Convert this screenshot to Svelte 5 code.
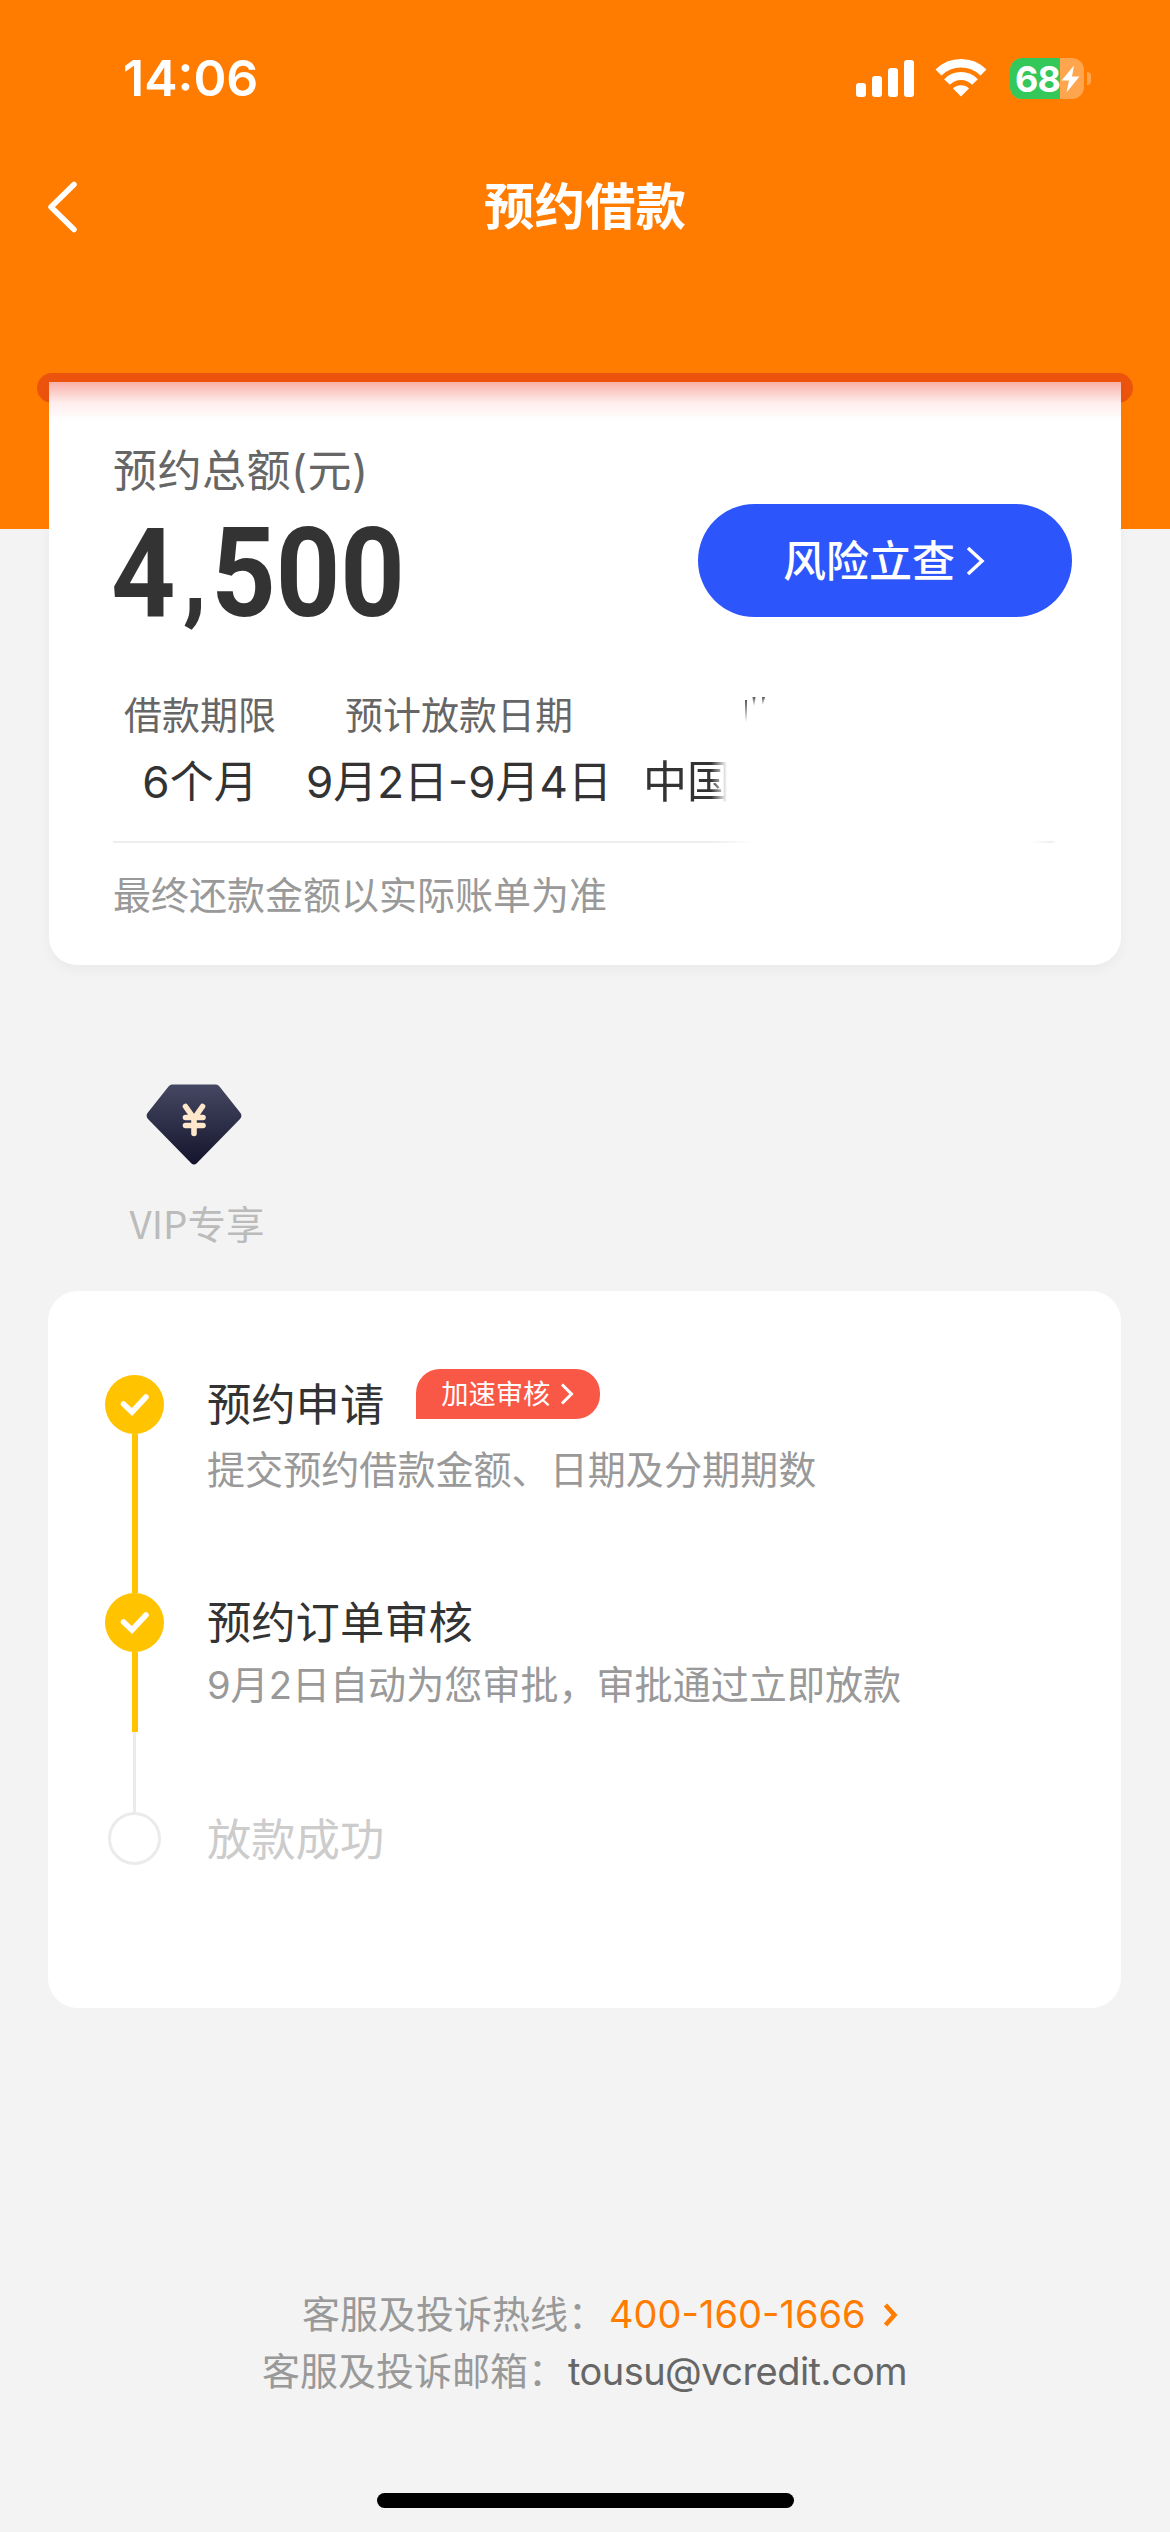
<script>
    let battery = 68;
    let amount = ['4', '500'];
    let hotline = '400-160-1666';
    let email = 'tousu@vcredit.com';

    let steps = [
        { title: '预约申请', desc: '提交预约借款金额、日期及分期期数', tag: '加速审核', state: 'done' },
        { title: '预约订单审核', desc: '9月2日自动为您审批，审批通过立即放款', state: 'current' },
        { title: '放款成功', state: 'todo' },
    ];
</script>

<div class="page">
    <div class="status">
        <span class="time">14:06</span>
        <div class="status-icons">
            <svg class="signal" width="58" height="37" viewBox="0 0 58 37" fill="#fff">
                <rect x="0" y="23" width="10" height="14" rx="3" />
                <rect x="16" y="16" width="10" height="21" rx="3" />
                <rect x="32" y="8" width="10" height="29" rx="3" />
                <rect x="48" y="0" width="10" height="37" rx="3" />
            </svg>
            <svg class="wifi" width="52" height="38" viewBox="0 0 52 38">
                <path d="M3.500 13.500A32 32 0 0 1 48.500 13.500" fill="none" stroke="#fff" stroke-width="8.500" />
                <path d="M12 23A19.500 19.500 0 0 1 40 23" fill="none" stroke="#fff" stroke-width="8" />
                <path d="M26 37.500L18 29.500A11.300 11.300 0 0 1 34 29.500Z" fill="#fff" />
            </svg>
            <div class="battery">
                <div class="battery-fill" style="width: {battery}%"></div>
                <span class="battery-text">{battery}</span>
                <svg class="bolt" width="19" height="28" viewBox="0 0 19 28">
                    <path d="M13 0.500L0.500 15.500H8L5.500 27.500L18.500 11.500H11Z" fill="#fff" />
                </svg>
            </div>
            <span class="battery-cap"></span>
        </div>
    </div>

    <div class="nav">
        <svg class="back" width="33" height="56" viewBox="0 0 33 56">
            <path d="M28 5.500L5 28L28 50.500" fill="none" stroke="#fff" stroke-width="5.500" stroke-linecap="round" stroke-linejoin="round" />
        </svg>
        <h1>预约借款</h1>
    </div>

    <div class="slot"></div>
    <div class="card loan">
        <div class="summary">
            <div>
                <div class="total-label">预约总额(元)</div>
                <div class="total">{amount[0]}<span class="comma">,</span>{amount[1]}</div>
            </div>
            <button class="check">
                <span>风险立查</span>
                <svg width="20" height="30" viewBox="0 0 20 30">
                    <path d="M3 2L17 15L3 28" fill="none" stroke="#fff" stroke-width="3.500" />
                </svg>
            </button>
        </div>

        <div class="terms">
            <div class="term">
                <div class="term-label">借款期限</div>
                <div class="term-value">6个月</div>
            </div>
            <div class="term">
                <div class="term-label">预计放款日期</div>
                <div class="term-value">9月2日-9月4日</div>
            </div>
            <div class="term account">
                <div class="term-label">
                    <!-- masked account label -->
                    <svg width="24" height="28" viewBox="0 0 24 28">
                        <defs>
                            <linearGradient id="tick" x1="0" y1="0" x2="0" y2="1">
                                <stop offset="0" stop-color="#555" />
                                <stop offset="1" stop-color="#fff" />
                            </linearGradient>
                        </defs>
                        <rect x="1" y="3" width="2" height="22" fill="url(#tick)" />
                        <path d="M8.500 0h3l-1 9h-1z" fill="url(#tick)" />
                        <path d="M18 0h3l-2 8h-1z" fill="url(#tick)" />
                    </svg>
                </div>
                <div class="term-value masked">中国</div>
            </div>
        </div>

        <div class="divider"></div>
        <div class="note">最终还款金额以实际账单为准</div>
    </div>

    <div class="vip">
        <svg width="96" height="82" viewBox="0 0 96 82">
            <defs>
                <linearGradient id="gem" x1="0" y1="0" x2="0" y2="1">
                    <stop offset="0" stop-color="#464762" />
                    <stop offset="1" stop-color="#14152c" />
                </linearGradient>
            </defs>
            <path d="M26 0.500H70Q72 0.500 73.500 2.500L94.500 29Q96.500 32 94 35L51 79Q48 82 45 79L2 35Q-0.500 32 1.500 29L22.500 2.500Q24 0.500 26 0.500Z" fill="url(#gem)" />
            <path d="M39.500 22.500L48 34.500L56.500 22.500M48 34.500V49.500M39.500 33.500H57M39.500 41.500H57" fill="none" stroke="#ffe7cb" stroke-width="5.600" stroke-linecap="round" stroke-linejoin="round" />
        </svg>
        <span>VIP专享</span>
    </div>

    <div class="card progress">
        {#each steps as step}
            <div class="step {step.state}">
                <div class="rail">
                    <div class="dot">
                        {#if step.state !== 'todo'}
                            <svg width="30" height="24" viewBox="0 0 30 24">
                                <path d="M3.500 11L12 19L26 4" fill="none" stroke="#fff" stroke-width="5.500" stroke-linecap="round" />
                            </svg>
                        {/if}
                    </div>
                    <div class="line"></div>
                    {#if step.state === 'current'}
                        <div class="line pending"></div>
                    {/if}
                </div>
                <div class="step-body">
                    <div class="step-head">
                        <span class="step-title">{step.title}</span>
                        {#if step.tag}
                            <span class="tag">
                                {step.tag}
                                <svg width="14" height="22" viewBox="0 0 14 22">
                                    <path d="M2 1.500L11.500 11L2 20.500" fill="none" stroke="#fff" stroke-width="3" />
                                </svg>
                            </span>
                        {/if}
                    </div>
                    {#if step.desc}
                        <div class="step-desc">{step.desc}</div>
                    {/if}
                </div>
            </div>
        {/each}
    </div>

    <div class="contact phone">
        <span>客服及投诉热线：</span>
        <span class="hotline">{hotline}</span>
        <svg width="15" height="24" viewBox="0 0 15 24">
            <path d="M2.500 2L11.500 12L2.500 22" fill="none" stroke="#ff7c00" stroke-width="4.500" />
        </svg>
    </div>
    <div class="contact mail">
        <span>客服及投诉邮箱：</span>
        <span class="email">{email}</span>
    </div>

    <div class="home-bar"></div>
</div>

<style>
    :global(body) {
        margin: 0;
        background: #f3f3f3;
    }

    .page {
        width: 1170px;
        height: 2532px;
        overflow: hidden;
        display: flex;
        flex-direction: column;
        background: linear-gradient(#ff7c00 529px, #f3f3f3 529px);
        font-family: Inter, "Noto Sans CJK SC", sans-serif;
        color: #333;
    }

    .status {
        height: 156px;
        box-sizing: border-box;
        padding: 0 79px 0 123px;
        display: flex;
        align-items: center;
        justify-content: space-between;
        color: #fff;
    }

    .time {
        font-size: 50px;
        font-weight: 600;
        line-height: 60px;
    }

    .status-icons {
        display: flex;
        align-items: center;
    }

    .wifi {
        margin: 0 23px 0 21px;
    }

    .battery {
        position: relative;
        width: 74px;
        height: 41px;
        border-radius: 12px;
        overflow: hidden;
        background: #ffa54d;
    }

    .battery-fill {
        height: 100%;
        background: #34c759;
    }

    .battery-text {
        position: absolute;
        left: 5px;
        top: 0;
        font-size: 36px;
        font-weight: 700;
        line-height: 42px;
        letter-spacing: -1px;
    }

    .bolt {
        position: absolute;
        left: 51px;
        top: 7px;
    }

    .battery-cap {
        width: 4px;
        height: 13px;
        margin-left: 3px;
        border-radius: 0 4px 4px 0;
        background: #ffa54d;
    }

    .nav {
        height: 102px;
        display: grid;
        grid-template-columns: 120px 1fr 120px;
        align-items: center;
    }

    .back {
        margin-left: 46px;
    }

    h1 {
        margin: 0;
        font-size: 50.5px;
        font-weight: 700;
        line-height: 60px;
        text-align: center;
        color: #fff;
    }

    .slot {
        flex: none;
        height: 30px;
        margin: 115px 37px 0;
        border-radius: 15px;
        background: #ec530c;
    }

    .card {
        flex: none;
        box-sizing: border-box;
        background: #fff;
    }

    .loan {
        height: 583px;
        z-index: 1;
        margin: -21px 49px 0;
        padding: 59px 49px 0 64px;
        border-radius: 0 0 28px 28px;
        background: linear-gradient(#f9afa7, #fcd9d6 14px, #feeceb 20px, #fff 38px);
        box-shadow: 0 5px 12px rgba(0, 0, 0, 0.04);
    }

    .summary {
        display: flex;
        justify-content: space-between;
        align-items: flex-start;
    }

    .total-label {
        font-size: 44px;
        letter-spacing: 0.5px;
        line-height: 60px;
        color: #666;
    }

    .total {
        margin-left: -2px;
        font-family: Roboto, sans-serif;
        font-size: 125px;
        font-weight: 700;
        line-height: 146px;
        height: 144px;
        transform: scaleX(0.9);
        transform-origin: left;
    }

    .comma {
        margin: 0 5px 0 8px;
        font-size: 108px;
        line-height: 0;
        vertical-align: 5px;
    }

    .check {
        display: flex;
        align-items: center;
        justify-content: center;
        gap: 10px;
        width: 374px;
        height: 113px;
        margin-top: 63px;
        padding: 0;
        border: none;
        border-radius: 57px;
        background: #2c55fb;
        color: #fff;
        font: inherit;
        font-size: 43px;
        font-weight: 500;
        line-height: 60px;
    }

    .check span {
        margin-left: -2px;
    }

    .terms {
        display: grid;
        grid-template-columns: 172px 346px 1fr;
        margin: 40px 0 0 1px;
    }

    .term {
        text-align: center;
        white-space: nowrap;
    }

    .term-label {
        height: 60px;
        font-size: 38px;
        line-height: 60px;
        color: #666;
    }

    .term-value {
        font-size: 44px;
        line-height: 74px;
    }

    .account {
        padding-left: 11px;
        text-align: left;
    }

    .account svg {
        display: block;
        margin-left: 101px;
        padding-top: 12px;
    }

    .masked {
        width: 90px;
        mask-image: linear-gradient(90deg, #000 68px, transparent 84px);
    }

    .divider {
        height: 2px;
        margin: 22px 15px 0 0;
        background: linear-gradient(90deg, #eee 600px, #fff 640px, #fff 918px, #eee 938px, #fff);
    }

    .note {
        margin-top: 22px;
        font-size: 38px;
        line-height: 60px;
        color: #999;
    }

    .vip {
        width: 132px;
        margin: 119px 0 0 131px;
        display: flex;
        flex-direction: column;
        align-items: center;
        gap: 26px;
    }

    .vip svg {
        margin-right: 6px;
    }

    .vip span {
        font-family: "Noto Sans CJK SC", sans-serif;
        font-size: 38.5px;
        font-weight: 400;
        line-height: 60px;
        color: #bbb;
        white-space: nowrap;
    }

    .progress {
        height: 717px;
        margin: 39px 49px 0 48px;
        padding: 84px 57px 0;
        border-radius: 30px;
    }

    .step {
        display: flex;
        gap: 43px;
        height: 218px;
    }

    .step.current {
        height: 219px;
    }

    .rail {
        width: 59px;
        display: flex;
        flex-direction: column;
        align-items: center;
    }

    .dot {
        flex: none;
        width: 59px;
        height: 59px;
        display: flex;
        align-items: center;
        justify-content: center;
        border-radius: 50%;
        background: #ffc300;
    }

    .todo .dot {
        box-sizing: border-box;
        width: 53px;
        height: 53px;
        border: 3px solid #ebebeb;
        background: #fff;
    }

    .line {
        width: 6px;
        flex: 1;
        background: #ffc300;
    }

    .line.pending {
        width: 3px;
        background: #ebebeb;
    }

    .todo .line {
        display: none;
    }

    .step-head {
        display: flex;
        align-items: flex-start;
        height: 60px;
    }

    .step-title {
        font-size: 44.3px;
        line-height: 60px;
    }

    .todo .step-title {
        margin-top: -2px;
        color: #ccc;
    }

    .tag {
        display: flex;
        align-items: center;
        gap: 10px;
        box-sizing: border-box;
        width: 184px;
        height: 50px;
        margin: -6px 0 0 32px;
        padding-left: 25px;
        border-radius: 24px 24px 24px 0;
        background: #fa5847;
        color: #fff;
        font-size: 27.3px;
        line-height: 51px;
    }

    .step-desc {
        margin-top: 5px;
        font-size: 38.1px;
        line-height: 60px;
        color: #999;
        white-space: nowrap;
    }

    .current .step-desc {
        margin-top: 2px;
    }

    .contact {
        display: flex;
        align-items: center;
        height: 57px;
        font-size: 38px;
        line-height: 57px;
        color: #999;
    }

    .phone {
        margin: 278px 0 0 302px;
    }

    .mail {
        margin-left: 262px;
    }

    .hotline {
        color: #ff7c00;
        margin: 0 17px 0 3px;
    }

    .email {
        margin-left: 2px;
        letter-spacing: -0.55px;
        color: #666;
    }

    .home-bar {
        width: 417px;
        height: 15px;
        margin: 93px auto 0;
        border-radius: 8px;
        background: #000;
    }
</style>
